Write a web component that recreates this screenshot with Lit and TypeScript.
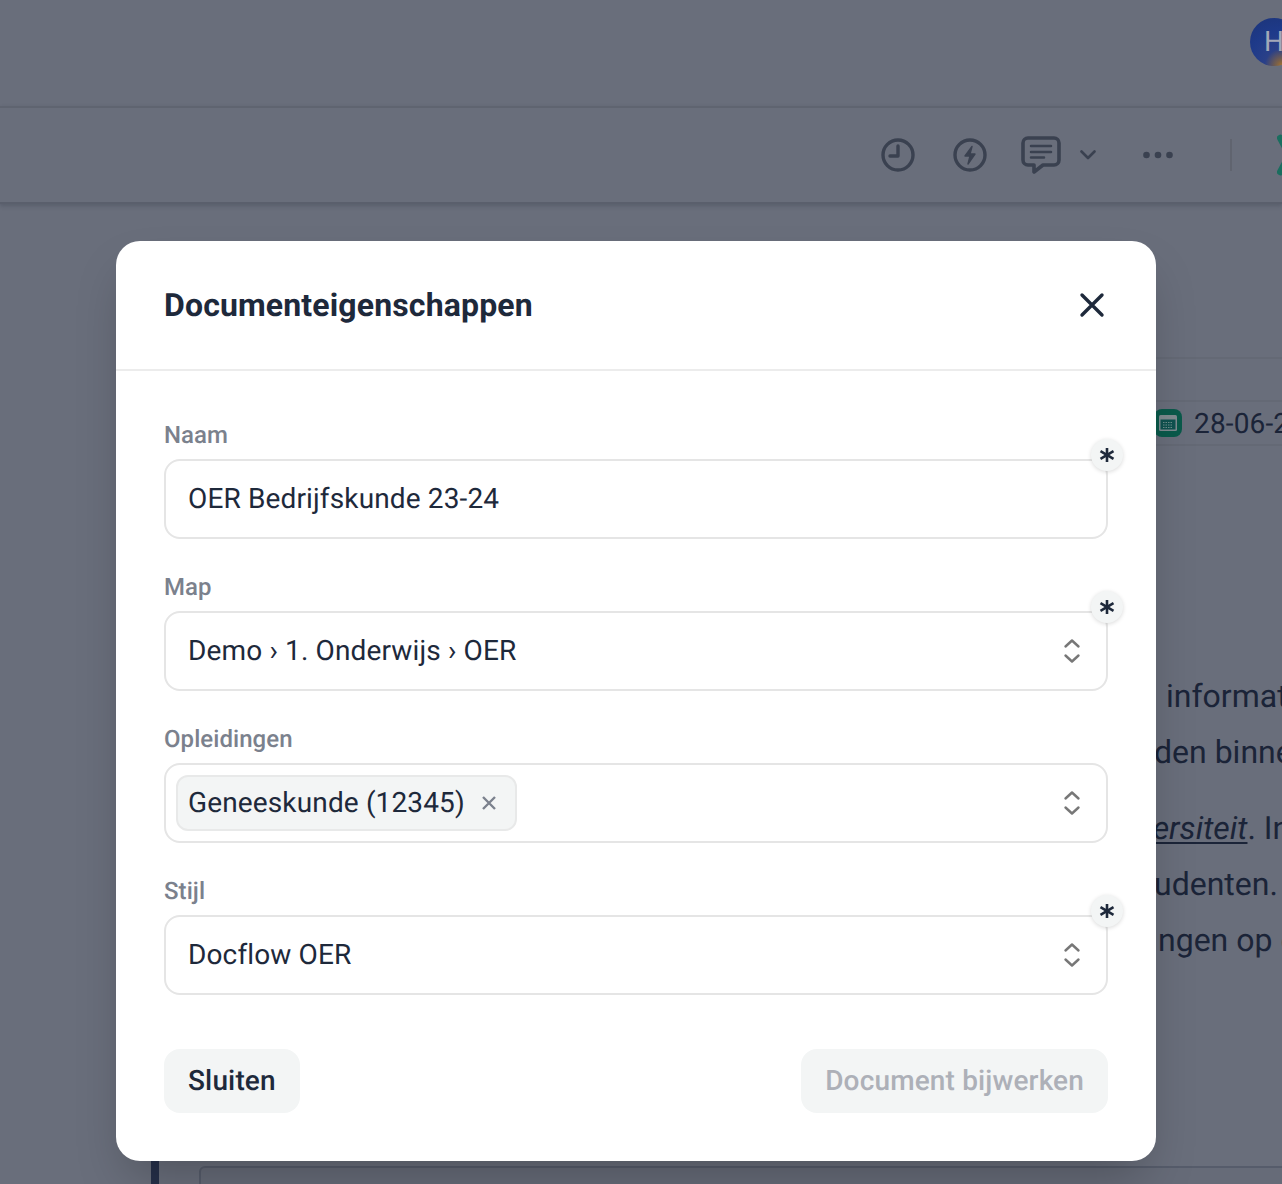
import { LitElement, html, css } from "lit";
import { customElement } from "lit/decorators.js";

const updown = html`<svg class="updown" width="18" height="26" viewBox="0 0 18 26" fill="none" stroke="#777" stroke-width="2.4" stroke-linecap="round" stroke-linejoin="round"><path d="M2.5 8.500 9 2.500l6.500 6"/><path d="M2.5 17.500 9 23.500l6.500-6"/></svg>`;
const star = html`<span class="req"><svg width="16" height="16" viewBox="0 0 16 16" fill="none" stroke="#1e293b" stroke-width="2.6"><path d="M8 1v14"/><path d="M1.500 4.200l13 7.600"/><path d="M14.500 4.200l-13 7.600"/></svg></span>`;

@customElement("app-root")
export class AppRoot extends LitElement {
  static styles = css`
    :host { display: block; width: 1282px; height: 1184px; position: relative; overflow: hidden; background: #696e7b; font-family: Roboto, "Liberation Sans", sans-serif; color: #1e293b; text-rendering: geometricPrecision; }
    .top { height: 106px; display: flex; align-items: flex-start; justify-content: flex-end; }
    .avatar { width: 48px; height: 48px; margin: 18px -16px 0 0; border-radius: 50%; flex: none; background: radial-gradient(circle at 32px 48px, #a8742c 0, #7a6048 10%, #2a4088 30%, #1e3a8a 60%, #1c3478 100%); color: #a2a8b8; font-size: 28px; line-height: 48px; padding-left: 14px; box-sizing: border-box; overflow: hidden; white-space: nowrap; }
    .bar { height: 94px; border-top: 2px solid #5f6470; border-bottom: 2px solid #5a5f6c; box-shadow: 0 2px 4px rgba(50,55,70,.3); display: flex; align-items: center; padding-left: 881px; overflow: hidden; }
    .bar svg { flex: none; display: block; }
    .clock { margin-right: 38px; }
    .bolt { margin-right: 34px; }
    .comment { margin-right: 19px; }
    .chev { margin-right: 47px; }
    .dots { margin-right: 57px; }
    .divider { width: 2px; height: 32px; background: #60646f; flex: none; margin-right: 45px; }
    .content { display: flex; flex-direction: column; align-items: flex-start; padding: 153px 0 0 1060px; position: relative; }
    .sheetline { height: 2px; width: 222px; background: #646975; }
    .date { display: flex; align-items: center; gap: 12px; margin-top: 41px; height: 42px; padding-left: 96px; border-top: 2px solid #646975; border-bottom: 2px solid #646975; width: 126px; white-space: nowrap; overflow: hidden; font-size: 28px; letter-spacing: .14px; color: #1b2438; }
    .cal { width: 28px; height: 28px; border-radius: 8px; background: #0a5a4b; display: flex; align-items: center; justify-content: center; flex: none; margin-left: -2px; }
    .text { width: 900px; margin: 222px 0 0 -600px; font-size: 32px; line-height: 56px; color: #1b2438; white-space: nowrap; }
    .text div { height: 56px; }
    .l1 { padding-left: 706px; }
    .l2 { padding-left: 694px; }
    .l3 { padding-left: 633px; margin-top: 20px; }
    .l4 { padding-left: 694px; }
    .l5 { padding-left: 698px; }
    .l3 em { text-decoration: underline; text-decoration-thickness: 2px; text-underline-offset: 3px; }
    .rail { position: absolute; left: 151px; top: 1161px; width: 8px; height: 23px; background: #26304a; }
    .box { position: absolute; left: 199px; top: 1166px; width: 1090px; height: 40px; border: 2px solid #565c6b; border-radius: 6px; background: #666b78; }

    .modal { position: absolute; left: 116px; top: 241px; width: 1040px; height: 920px; background: #fff; border-radius: 24px; display: flex; flex-direction: column; box-shadow: 0 25px 50px -12px rgba(0,0,0,.25); }
    header { height: 128px; border-bottom: 2px solid #ececec; display: flex; align-items: center; justify-content: space-between; padding: 0 48px; flex: none; }
    h2 { margin: 0; font-size: 32px; font-weight: 700; letter-spacing: .14px; color: #1e293b; }
    .close { display: block; margin-right: 3px; }
    .body { padding: 48px; display: flex; flex-direction: column; flex: 1; }
    .field { display: flex; flex-direction: column; gap: 8px; margin-bottom: 32px; }
    label { font-size: 24px; font-weight: 500; line-height: 32px; height: 32px; letter-spacing: .06px; color: #7b818d; display: block; }
    .input { position: relative; height: 80px; box-sizing: border-box; border: 2px solid #e5e5e5; border-radius: 16px; display: flex; align-items: center; padding: 0 24px 2px 22px; font-size: 28px; letter-spacing: .14px; color: #1e293b; }
    .input .updown { margin-left: auto; margin-right: 1px; margin-top: 2px; }
    .req { position: absolute; right: -17px; top: -22px; width: 32px; height: 32px; border-radius: 50%; background: #f3f5f5; box-shadow: 0 1px 4px rgba(0,0,0,.15); display: flex; align-items: center; justify-content: center; }
    .chip { margin-left: -12px; margin-top: 2px; height: 56px; box-sizing: border-box; border: 2px solid #e8e9e9; background: #f3f5f5; border-radius: 12px; display: flex; align-items: center; padding: 0 19px 2px 10px; gap: 17px; }
    .chip svg { margin-top: 2px; }
    .foot { margin-top: auto; display: flex; justify-content: space-between; }
    button { height: 64px; border: 0; border-radius: 16px; background: #f3f5f5; padding: 0 24px 2px; font: 500 28px Roboto, "Liberation Sans", sans-serif; letter-spacing: .15px; color: #1e293b; text-rendering: geometricPrecision; }
    button[disabled] { color: #adb0b8; }
  `;

  render() {
    return html`
      <div class="top"><div class="avatar">H</div></div>
      <div class="bar">
        <svg class="clock" width="34" height="34" viewBox="0 0 34 34" fill="none" stroke="#3a4150" stroke-width="3.400" stroke-linecap="round" stroke-linejoin="round"><circle cx="17" cy="17" r="15"/><path d="M17 8v10h-8"/></svg>
        <svg class="bolt" width="34" height="34" viewBox="0 0 34 34" fill="none" stroke="#3a4150" stroke-width="3.400" stroke-linejoin="round"><circle cx="17" cy="17" r="15"/><path d="M19 8.500l-7 9.500h5l-2 8 7-10h-5z" fill="#3a4150" stroke-width="1.400"/></svg>
        <svg class="comment" width="40" height="38" viewBox="0 0 40 38" fill="none" stroke="#3a4150" stroke-width="3.600" stroke-linecap="round" stroke-linejoin="round"><path d="M7 2h26a5 5 0 0 1 5 5v17a5 5 0 0 1-5 5H22l-9 7v-7H7a5 5 0 0 1-5-5V7a5 5 0 0 1 5-5z"/><path d="M10 10h20M10 16h20M10 21.500h13" stroke-width="2.500"/></svg>
        <svg class="chev" width="16" height="10" viewBox="0 0 16 10" fill="none" stroke="#3a4150" stroke-width="2.600" stroke-linecap="round" stroke-linejoin="round"><path d="M1.500 1.500 8 8l6.500-6.500"/></svg>
        <svg class="dots" width="30" height="8" viewBox="0 0 30 8" fill="#3a4150"><circle cx="3.500" cy="4" r="3.300"/><circle cx="15" cy="4" r="3.300"/><circle cx="26.500" cy="4" r="3.300"/></svg>
        <div class="divider"></div>
        <svg width="30" height="42" viewBox="0 0 30 42" fill="none" stroke="#1a6e5f" stroke-width="6.500" stroke-linecap="round" stroke-linejoin="round"><path d="M3.200 4l9 17-9 17"/></svg>
      </div>
      <div class="content">
        <div class="sheetline"></div>
        <div class="date">
          <span class="cal"><svg width="18" height="16" viewBox="0 0 18 16"><rect width="18" height="16" rx="1.500" fill="#7f8b90"/><rect x="1.500" y="4.500" width="15" height="10" fill="#0f5250"/><path d="M4 7.500h10M4 10h10M4 12.500h10" stroke="#6f8f8c" stroke-width="1" stroke-dasharray="1.500 1"/></svg></span>
          <span>28-06-2023</span>
        </div>
        <div class="text">
          <div class="l1">informatie</div>
          <div class="l2">den binnen</div>
          <div class="l3"><em>Universiteit</em>. In de</div>
          <div class="l4">udenten. De</div>
          <div class="l5">ngen op de</div>
        </div>
      </div>
      <div class="rail"></div>
      <div class="box"></div>

      <section class="modal">
        <header>
          <h2>Documenteigenschappen</h2>
          <svg class="close" width="26" height="26" viewBox="0 0 26 26" fill="none" stroke="#1e293b" stroke-width="3.400" stroke-linecap="round"><path d="M3 3l20 20M23 3L3 23"/></svg>
        </header>
        <div class="body">
          <div class="field"><label>Naam</label><div class="input">OER Bedrijfskunde 23-24${star}</div></div>
          <div class="field"><label>Map</label><div class="input">Demo › 1. Onderwijs › OER${updown}${star}</div></div>
          <div class="field"><label>Opleidingen</label><div class="input"><span class="chip">Geneeskunde (12345)
            <svg width="14" height="14" viewBox="0 0 14 14" fill="none" stroke="#7b818d" stroke-width="2.400"><path d="M1 1l12 12M13 1L1 13"/></svg></span>${updown}</div></div>
          <div class="field"><label>Stijl</label><div class="input">Docflow OER${updown}${star}</div></div>
          <div class="foot"><button>Sluiten</button><button disabled>Document bijwerken</button></div>
        </div>
      </section>
    `;
  }
}
